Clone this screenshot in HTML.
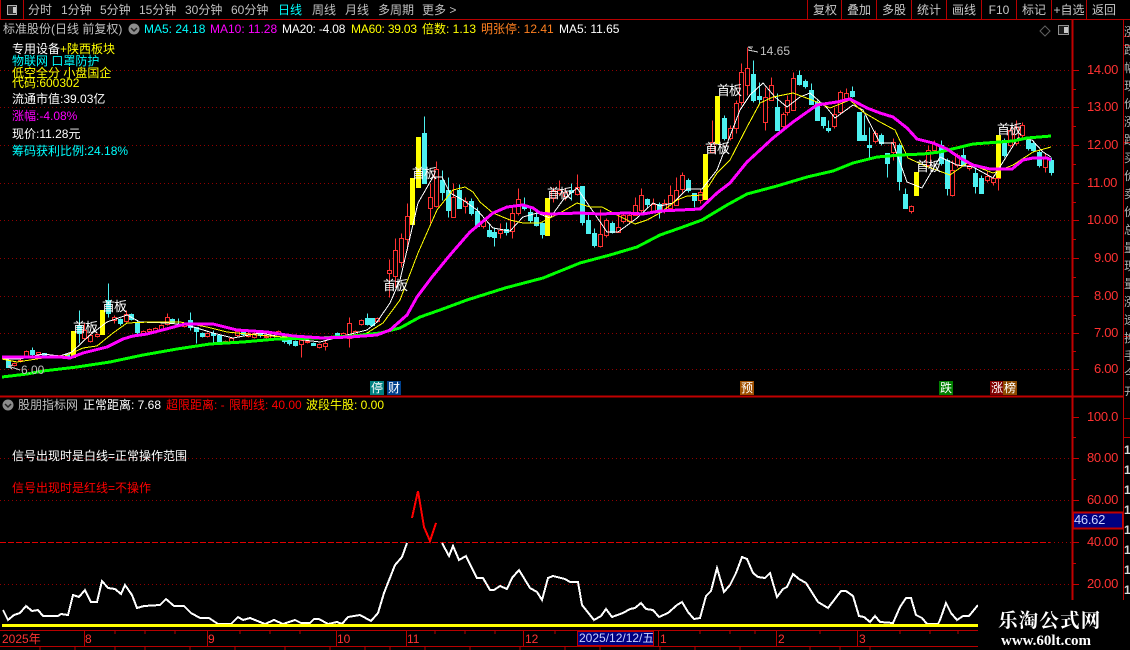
<!DOCTYPE html>
<html lang="zh"><head><meta charset="utf-8"><title>股票K线</title>
<style>
html,body{margin:0;padding:0;background:#000;width:1130px;height:650px;overflow:hidden}
#r{position:relative;width:1130px;height:650px;overflow:hidden;background:#000;font:12px/14px "Liberation Sans","WenQuanYi Zen Hei","Noto Sans CJK SC",sans-serif;color:#fff}
#r span,#r div{position:absolute;white-space:nowrap}
svg{position:absolute;left:0;top:0}
.g{color:#c0c0c0}.c{color:#0ff}.m{color:#f0f}.y{color:#ff0}.o{color:#ff8020}.w{color:#fff}.e{color:#f00}
.a{color:#ff3232;left:1087px;font-size:13px;letter-spacing:-.3px}
.b{color:#c8c8c8;top:3px;text-align:center;width:34px}
.t{width:14px;height:14px;line-height:14px;text-align:center;color:#fff;top:381px;font-size:12px}
.h{color:#fff;font-size:13px;letter-spacing:-1px}
.x{color:#ff3232;top:632px}
</style></head><body><div id="r">
<svg width="1130" height="650" viewBox="0 0 1130 650">
<g shape-rendering="crispEdges" fill="none">
<path stroke="#900000" stroke-dasharray="1 3" d="M0 70.5H1072M0 107.5H1072M0 145.5H1072M0 183.5H1072M0 220.5H1072M0 258.5H1072M0 296.5H1072M0 333.5H1072M0 369.5H1072M0 458.5H1072M0 500.5H1072M0 584.5H1072"/>
<path stroke="#e00000" stroke-dasharray="6 2" d="M0 542.5H1050"/>
<path stroke="#a00000" stroke-dasharray="1 3" d="M1050 542.5H1072"/>
<g transform="translate(.5 .5)">
<path stroke="#ff3232" d="M14 362V366M20 359V362M26 350V357M38 352V355M60 355V357M84 323V340M90 333V342M97 333V337M114 315V323M126 310V322M143 330V335M149 328V332M155 327V332M161 324V330M167 313V325M184 322V327M207 332V337M225 340V343M231 337V342M237 330V337M248 332V337M254 332V338M266 335V338M272 332V339M278 330V335M301 339V357M307 340V343M319 343V348M325 340V350M331 335V338M343 332V338M349 317V347M355 330V335M361 319V325M377 317V322M389 259V297M395 238V287M401 233V267M407 203V250M430 183V223M436 161V207M453 183V217M465 197V213M483 220V228M500 223V238M512 205V238M518 188V215M553 187V202M559 180V195M565 188V200M577 174V195M600 209V247M606 218V237M618 213V232M623 213V223M629 212V223M635 197V215M641 188V212M653 198V212M664 199V213M670 185V209M676 177V205M682 172V192M700 188V203M712 120V153M730 125V140M736 100V133M741 63V105M747 47V95M765 87V130M771 77V100M783 112V128M787 95V115M793 72V110M834 107V128M840 90V113M846 88V100M875 130V143M893 138V160M911 205V213M928 145V167M934 140V152M952 160V196M957 153V167M969 163V170M987 170V182M993 175V185M998 172V190M1010 127V147M1016 120V145M1022 122V137M1045 153V172"/>
<path stroke="#ff3232" fill="#000" d="M12 363h4v2h-4zM18 360h4v1h-4zM24 351h4v5h-4zM36 352h4v2h-4zM58 355h4v1h-4zM82 330h4v8h-4zM88 335h4v6h-4zM95 334h4v2h-4zM112 317h4v3h-4zM124 314h4v7h-4zM141 331h4v3h-4zM147 329h4v2h-4zM153 328h4v3h-4zM159 325h4v4h-4zM165 317h4v7h-4zM182 323h4v3h-4zM205 333h4v3h-4zM223 341h4v1h-4zM229 338h4v3h-4zM235 331h4v4h-4zM246 333h4v3h-4zM252 333h4v4h-4zM264 336h4v1h-4zM270 333h4v5h-4zM276 331h4v3h-4zM299 340h4v4h-4zM305 341h4v1h-4zM317 344h4v3h-4zM323 343h4v3h-4zM329 336h4v1h-4zM341 333h4v4h-4zM347 323h4v15h-4zM353 331h4v3h-4zM359 320h4v4h-4zM375 318h4v3h-4zM387 270h4v3h-4zM393 250h4v26h-4zM399 238h4v24h-4zM405 216h4v23h-4zM428 197h4v11h-4zM434 169h4v37h-4zM451 197h4v20h-4zM463 201h4v5h-4zM481 221h4v5h-4zM498 230h4v3h-4zM510 213h4v18h-4zM516 199h4v14h-4zM551 190h4v8h-4zM557 190h4v3h-4zM563 192h4v4h-4zM575 187h4v7h-4zM598 234h4v12h-4zM604 220h4v15h-4zM616 227h4v5h-4zM621 215h4v6h-4zM627 215h4v6h-4zM633 205h4v10h-4zM639 195h4v15h-4zM651 204h4v8h-4zM662 203h4v7h-4zM668 195h4v13h-4zM674 190h4v15h-4zM680 175h4v14h-4zM698 192h4v8h-4zM710 142h4v10h-4zM728 128h4v10h-4zM734 103h4v25h-4zM739 72h4v30h-4zM745 68h4v17h-4zM763 97h4v25h-4zM769 85h4v15h-4zM781 114h4v12h-4zM785 100h4v12h-4zM791 78h4v32h-4zM832 114h4v12h-4zM838 92h4v20h-4zM844 93h4v5h-4zM873 133h4v8h-4zM891 142h4v10h-4zM909 206h4v5h-4zM926 150h4v15h-4zM932 143h4v7h-4zM950 170h4v25h-4zM955 155h4v10h-4zM967 165h4v3h-4zM985 176h4v4h-4zM991 178h4v4h-4zM996 175h4v3h-4zM1008 130h4v15h-4zM1014 127h4v16h-4zM1020 125h4v10h-4zM1043 157h4v10h-4z"/>
<path stroke="#4df0f0" d="M8 358V367M32 347V355M44 353V356M67 353V356M79 310V343M108 283V317M120 318V325M131 313V320M137 320V335M172 318V323M178 318V323M190 312V330M196 327V343M202 332V337M213 330V343M219 335V343M243 331V335M260 331V337M284 335V343M289 338V345M295 340V346M313 342V345M337 332V338M367 313V325M372 318V326M424 116V183M442 170V200M448 177V217M459 184V208M471 198V215M477 207V227M489 223V237M494 227V246M506 222V235M524 197V210M530 208V222M536 213V226M542 222V238M571 183V200M582 186V225M588 212V233M594 228V247M612 221V233M647 198V207M659 202V218M688 178V192M694 193V207M724 115V140M753 60V102M759 82V103M777 93V130M799 70V85M805 79V88M811 83V104M817 100V120M823 117V128M828 120V132M852 86V97M859 112V140M864 115V140M869 127V157M881 133V145M887 153V177M899 143V190M905 188V208M941 140V165M947 158V195M963 148V165M975 167V193M981 175V193M1004 138V157M1028 138V150M1033 140V152M1039 150V167M1051 157V175"/>
<path stroke="#4df0f0" fill="#4df0f0" d="M6 360h4v7h-4zM30 350h4v4h-4zM42 353h4v2h-4zM65 354h4v2h-4zM77 325h4v8h-4zM106 300h4v13h-4zM118 319h4v4h-4zM129 314h4v5h-4zM135 322h4v10h-4zM170 319h4v3h-4zM188 320h4v7h-4zM194 327h4v4h-4zM200 333h4v3h-4zM211 333h4v2h-4zM217 335h4v8h-4zM241 332h4v2h-4zM258 332h4v3h-4zM282 336h4v5h-4zM287 339h4v4h-4zM293 341h4v4h-4zM311 343h4v2h-4zM335 333h4v4h-4zM365 318h4v6h-4zM370 318h4v7h-4zM422 133h4v50h-4zM440 180h4v12h-4zM446 190h4v20h-4zM457 190h4v18h-4zM469 201h4v12h-4zM475 211h4v15h-4zM487 230h4v6h-4zM492 232h4v5h-4zM504 229h4v3h-4zM522 205h4v3h-4zM528 212h4v8h-4zM534 217h4v8h-4zM540 223h4v11h-4zM569 190h4v2h-4zM580 186h4v36h-4zM586 220h4v13h-4zM592 233h4v12h-4zM610 223h4v9h-4zM645 199h4v5h-4zM657 204h4v8h-4zM686 180h4v10h-4zM692 193h4v7h-4zM722 118h4v20h-4zM751 74h4v26h-4zM757 96h4v3h-4zM775 107h4v23h-4zM797 75h4v9h-4zM803 81h4v5h-4zM809 90h4v14h-4zM815 102h4v18h-4zM821 117h4v8h-4zM826 128h4v2h-4zM850 91h4v5h-4zM857 112h4v28h-4zM862 135h4v5h-4zM867 145h4v2h-4zM879 135h4v8h-4zM885 153h4v10h-4zM897 145h4v36h-4zM903 194h4v14h-4zM939 145h4v18h-4zM945 160h4v28h-4zM961 155h4v10h-4zM973 173h4v13h-4zM979 178h4v15h-4zM1002 140h4v15h-4zM1026 140h4v8h-4zM1031 143h4v7h-4zM1037 152h4v13h-4zM1049 160h4v12h-4z"/>
</g>
<path fill="#ff0" d="M71 331h5v27h-5zM100 310h5v25h-5zM410 178h5v47h-5zM416 137h5v51h-5zM545 198h5v38h-5zM703 154h5v46h-5zM715 96h5v48h-5zM914 172h5v24h-5zM996 135h5v43h-5z"/>
<polyline stroke="#fff" points="2 359 20 359 43 354 60 356 72 352 90 335 107 322 127 315 140 322 167 323 187 325 213 333 233 338 260 333 287 338 320 342 347 335 367 330 377 322 390 303 400 280 407 250 418 203 433 177 442 177 450 193 463 200 477 210 493 228 510 231 523 217 537 213 550 218 563 200 577 188 590 207 607 232 618 232 637 218 653 203 660 206 673 203 687 189 702 189 717 170 740 110 750 95 763 83 775 97 787 107 800 97 810 93 827 108 835 118 853 105 863 110 880 143 893 143 907 182 922 188 940 157 957 165 973 167 993 178 1018 138 1032 140 1043 152 1051 157"/>
<polyline stroke="#ff0" points="2 359 17 362 43 358 63 357 83 348 97 346 113 333 127 323 150 322 180 322 207 327 227 332 257 335 283 337 320 339 350 337 367 333 383 323 400 300 418 253 437 210 453 190 465 187 473 192 480 202 493 213 510 220 523 223 540 223 560 213 577 203 590 207 602 207 617 215 635 224 647 220 660 213 677 200 687 196 703 195 717 173 730 160 747 127 760 103 773 97 793 93 817 102 830 108 850 100 863 112 880 122 895 130 908 158 923 165 950 175 967 163 993 173 1013 165 1033 152 1051 147"/>
<polyline stroke="#0f0" stroke-width="3" points="2 377 27 374 43 371 77 367 110 362 143 355 177 349 210 344 243 342 277 339 320 338 353 336 380 333 400 328 420 317 440 310 467 300 505 288 543 278 580 263 610 255 637 247 660 235 680 228 702 220 727 205 747 194 777 186 807 177 833 171 853 163 877 157 900 155 923 154 940 152 973 144 1013 141 1027 138 1051 136"/>
<polyline stroke="#f0f" stroke-width="3" points="2 357 60 357 70 358 83 353 107 347 123 339 133 336 147 334 170 328 185 324 213 324 237 330 267 332 293 336 323 338 350 337 377 335 390 330 407 315 417 297 432 277 450 255 470 232 493 213 507 207 523 205 533 208 540 213 550 214 580 213 600 214 627 213 643 214 660 211 680 210 700 209 717 193 730 183 747 162 773 138 793 122 817 105 837 102 850 99 867 108 880 113 893 117 907 128 917 139 933 143 947 149 960 158 973 165 990 169 1012 169 1023 160 1033 158 1047 158 1051 160"/>
<polyline stroke="#fff" stroke-width="2" points="3 610 8 620 14 615 20 613 26 606 32 611 38 610 43 616 58 616 61 614 68 615 73 595 79 597 85 590 91 602 97 602 102 581 108 588 115 589 121 594 125 585 132 595 137 608 144 606 160 605 166 599 174 606 184 606 191 613 200 618 209 618 218 624 231 624 238 617 243 620 250 618 265 624 274 620 283 624 295 620 301 623 310 623 314 619 319 619 328 624 337 622 342 624 348 617 360 615 371 621 378 613 384 593 395 565 402 557 407 543"/>
<polyline stroke="#fff" stroke-width="2" points="442 543 449 556 453 546 459 560 466 556 477 578 483 578 490 590 494 590 500 586 507 589 512 578 519 570 530 588 537 592 542 600 548 578 553 576 565 579 570 582 578 582 582 605 594 620 601 616 606 609 612 617 623 613 630 609 635 608 641 603 646 609 653 610 659 617 668 613 677 605 682 602 688 612 694 619 700 618 706 596 711 591 717 568 724 592 730 585 736 573 742 557 747 559 753 573 758 577 765 578 770 573 777 597 783 589 787 587 793 574 799 579 806 583 818 602 828 608 841 591 846 591 853 596 859 616 864 617 870 622 875 616 880 622 893 623 900 607 906 598 911 598 916 615 922 618 927 624 938 624 940 620 946 603 951 613 957 620 963 616 969 616 978 605"/>
<polyline stroke="#f00" stroke-width="2" points="412 518 418 491 424 527 430 541 436 523"/>
<path stroke="#ff0" stroke-width="3" d="M2 625.5H978"/>
<path stroke="#c8c8c8" d="M748 47L752 49M748 47L753 47M748 50L758 52M8 366L20 370M8 366L13 365M8 366L12 369"/>
<path stroke="#b80000" d="M0 19.5H1130M23.5 0V19M0.5 0V19M0 630.5H978M0 646.5H978M84.5 631V646M207.5 631V646M336.5 631V646M406.5 631V646M523.5 631V646M658.5 631V646M776.5 631V646M857.5 631V646M807.5 0V19M841.5 0V19M876.5 0V19M911.5 0V19M946.5 0V19M981.5 0V19M1016.5 0V19M1051.5 0V19M1086.5 0V19M1123.5 20V600M1124 45.5H1130M1124 36.5H1130M1124 142.5H1130M1124 336.5H1130M1124 418.5H1130M1124 437.5H1130M115 631V634M145 631V634M175 631V634M240 631V634M270 631V634M300 631V634M435 631V634M465 631V634M495 631V634M555 631V634M595 631V634M700 631V634M730 631V634M755 631V634M820 631V634M900 631V634M930 631V634M958 631V634M40 646V650M75 646V650M115 646V650M145 646V650M190 646V650M235 646V650M285 646V650M330 646V650M365 646V650M390 646V650M425 646V650M470 646V650M520 646V650M565 646V650M600 646V650M660 646V650M695 646V650M740 646V650M810 646V650M840 646V650M870 646V650"/>
<path stroke="#c80000" d="M1073 70.5H1079M1073 107.5H1079M1073 145.5H1079M1073 183.5H1079M1073 220.5H1079M1073 258.5H1079M1073 296.5H1079M1073 333.5H1079M1073 369.5H1079M1073 89.5H1076M1073 126.5H1076M1073 164.5H1076M1073 202.5H1076M1073 239.5H1076M1073 277.5H1076M1073 315.5H1076M1073 351.5H1076M1073 417.5H1079M1073 458.5H1079M1073 500.5H1079M1073 542.5H1079M1073 584.5H1079M1073 437.5H1076M1073 479.5H1076M1073 563.5H1076"/>
<path stroke="#c00000" stroke-width="2" d="M1072.5 20V600M0 396.5H1124"/>
<path stroke="#c00000" stroke-width="2" fill="#000080" d="M1073 512.5H1123V528.5H1073z"/>
<path fill="#2a2a2a" stroke="#b0b0b0" d="M7.5 5.5h9v9h-9z"/>
<path fill="#c8c8c8" d="M13 7h3v6h-3z"/>
<path fill="#1a1a1a" stroke="#909090" d="M1058.5 25.5h10v9h-10z"/>
</g>
<path fill="#c8c8c8" d="M1064 27h4v6h-4z"/>
<path fill="none" stroke="#606060" d="M1045 26l5 5-5 5-5-5z"/>
<circle cx="134" cy="29" r="5.5" fill="#8c8c8c"/><path d="M131 28l3 3 3-3" stroke="#222" stroke-width="1.5" fill="none"/>
<circle cx="8" cy="405" r="5.5" fill="#8c8c8c"/><path d="M5 404l3 3 3-3" stroke="#222" stroke-width="1.5" fill="none"/>
</svg>

<span class="g" style="left:28px;top:3px">分时</span>
<span class="g" style="left:61px;top:3px">1分钟</span>
<span class="g" style="left:100px;top:3px">5分钟</span>
<span class="g" style="left:139px;top:3px">15分钟</span>
<span class="g" style="left:185px;top:3px">30分钟</span>
<span class="g" style="left:231px;top:3px">60分钟</span>
<span class="c" style="left:278px;top:3px">日线</span>
<span class="g" style="left:312px;top:3px">周线</span>
<span class="g" style="left:345px;top:3px">月线</span>
<span class="g" style="left:378px;top:3px">多周期</span>
<span class="g" style="left:422px;top:3px">更多 &gt;</span>
<span class="b" style="left:808px">复权</span><span class="b" style="left:842px">叠加</span><span class="b" style="left:877px">多股</span><span class="b" style="left:912px">统计</span><span class="b" style="left:947px">画线</span><span class="b" style="left:982px">F10</span><span class="b" style="left:1017px">标记</span><span class="b" style="left:1052px">+自选</span><span class="b" style="left:1087px">返回</span>

<span class="g" style="left:3px;top:22px">标准股份(日线 前复权)</span>
<span class="c" style="left:144px;top:22px">MA5: 24.18</span>
<span class="m" style="left:210px;top:22px">MA10: 11.28</span>
<span class="w" style="left:282px;top:22px;letter-spacing:-.2px">MA20: -4.08</span>
<span class="y" style="left:351px;top:22px;letter-spacing:-.2px">MA60: 39.03</span>
<span class="y" style="left:422px;top:22px">倍数: 1.13</span>
<span class="o" style="left:481px;top:22px">明张停: 12.41</span>
<span class="w" style="left:559px;top:22px">MA5: 11.65</span>

<span class="w" style="left:12px;top:42px">专用设备<span class="y" style="position:static">+陕西板块</span></span>
<span class="c" style="left:12px;top:54px">物联网 口罩防护</span>
<span class="y" style="left:12px;top:66px">低空全分 小盘国企</span>
<span class="y" style="left:12px;top:76px">代码:600302</span>
<span class="w" style="left:12px;top:92px">流通市值:39.03亿</span>
<span class="m" style="left:12px;top:109px">涨幅:-4.08%</span>
<span class="w" style="left:12px;top:127px">现价:11.28元</span>
<span class="c" style="left:12px;top:144px">筹码获利比例:24.18%</span>

<span class="h" style="left:73px;top:321px">首板</span>
<span class="h" style="left:102px;top:300px">首板</span>
<span class="h" style="left:383px;top:279px">首板</span>
<span class="h" style="left:412px;top:167px">首板</span>
<span class="h" style="left:547px;top:187px">首板</span>
<span class="h" style="left:705px;top:142px">首板</span>
<span class="h" style="left:717px;top:84px">首板</span>
<span class="h" style="left:916px;top:160px">首板</span>
<span class="h" style="left:997px;top:123px">首板</span>
<span class="g" style="left:760px;top:44px">14.65</span>
<span class="g" style="left:21px;top:363px">6.00</span>

<span class="t" style="left:370px;background:#008080">停</span>
<span class="t" style="left:387px;background:#00408c">财</span>
<span class="t" style="left:740px;background:#a05000">预</span>
<span class="t" style="left:939px;background:#008000">跌</span>
<span class="t" style="left:990px;background:#800000">涨</span>
<span class="t" style="left:1003px;background:#8c4a00">榜</span>

<span class="a" style="top:63px">14.00</span><span class="a" style="top:100px">13.00</span><span class="a" style="top:138px">12.00</span><span class="a" style="top:176px">11.00</span><span class="a" style="top:213px">10.00</span><span class="a" style="top:251px;left:1094px">9.00</span><span class="a" style="top:289px;left:1094px">8.00</span><span class="a" style="top:326px;left:1094px">7.00</span><span class="a" style="top:362px;left:1094px">6.00</span>
<span class="a" style="top:410px">100.0</span><span class="a" style="top:451px">80.00</span><span class="a" style="top:493px">60.00</span><span class="a" style="top:535px">40.00</span><span class="a" style="top:577px">20.00</span>
<span style="left:1074px;top:513px;color:#c8d0ff;font-size:13px;letter-spacing:-.3px">46.62</span>

<span class="g" style="left:18px;top:398px">股朋指标网</span>
<span class="w" style="left:83px;top:398px">正常距离: 7.68</span>
<span class="e" style="left:166px;top:398px">超限距离: -</span>
<span class="e" style="left:229px;top:398px">限制线: 40.00</span>
<span class="y" style="left:306px;top:398px">波段牛股: 0.00</span>
<span class="w" style="left:12px;top:449px">信号出现时是白线=正常操作范围</span>
<span class="e" style="left:12px;top:481px">信号出现时是红线=不操作</span>

<span class="x" style="left:2px">2025年</span>
<span class="x" style="left:85px">8</span><span class="x" style="left:208px">9</span><span class="x" style="left:337px">10</span><span class="x" style="left:407px">11</span><span class="x" style="left:525px">12</span><span class="x" style="left:660px">1</span><span class="x" style="left:778px">2</span><span class="x" style="left:859px">3</span>
<span style="left:577px;top:631px;width:77px;height:15px;background:#000080;color:#c8d0ff;border:1px solid #c00000;box-sizing:border-box;line-height:13px;padding-left:1px;overflow:hidden">2025/12/12/五</span>

<div style="left:1124px;top:20px;width:6px;height:376px;overflow:hidden;color:#b0b0b0;font-size:12px;line-height:18px;white-space:normal">
<span style="left:0;top:3px;width:14px;white-space:normal">涨<br>跌<br>幅<br>现<br>价<br>涨<br>跌<br>买<br>价<br>卖<br>价<br>总<br>量<br>现<br>量<br>涨<br>速<br>换<br>手<br>今<br>开</span>
</div>
<div style="left:1124px;top:440px;width:6px;height:160px;overflow:hidden;color:#d8d8d8;font-weight:bold;line-height:20px;white-space:normal">
<span style="left:0;top:0;width:14px;white-space:normal">1<br>1<br>1<br>1<br>1<br>1<br>1<br>1</span>
</div>

<div style="left:978px;top:600px;width:152px;height:50px;background:#000"></div>
<span style="left:998px;top:607px;font:bold 19.5px/24px 'Noto Serif CJK SC','Liberation Serif',serif;letter-spacing:1.2px;color:#fff">乐淘公式网</span>
<span style="left:1001px;top:633px;font:bold 15px/16px 'Liberation Serif',serif;color:#fff">www.60lt.com</span>
</div></body></html>
